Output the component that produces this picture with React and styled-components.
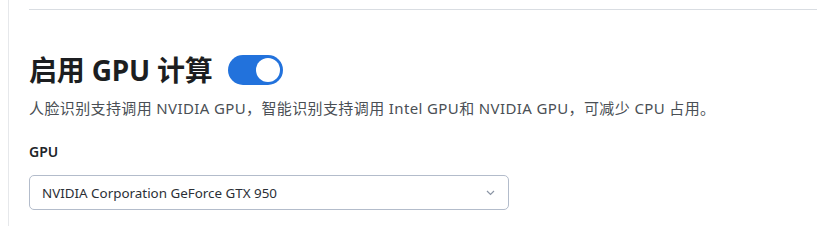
import React, { useState } from 'react';
import styled, { createGlobalStyle } from 'styled-components';

const GlobalStyle = createGlobalStyle`
  html, body {
    margin: 0;
    padding: 0;
    background: #ffffff;
  }
  body {
    font-family: "Noto Sans", "Noto Sans CJK SC", sans-serif;
    color: #212529;
  }
`;

const Page = styled.div`
  padding-left: 8px;
  height: 226px;
  overflow: hidden;
`;

const Panel = styled.div`
  border-left: 1px solid #e6e8eb;
  padding: 9px 0 20px 20px;
  min-height: 226px;
  box-sizing: border-box;
`;

const Divider = styled.hr`
  margin: 0;
  border: 0;
  border-top: 1px solid #d9dde2;
`;

const TitleRow = styled.div`
  display: flex;
  align-items: center;
  gap: 15px;
  margin-top: 45px;
  height: 30px;
`;

const Title = styled.h2`
  margin: 0;
  font-size: 28px;
  font-weight: 700;
  line-height: 1;
  color: #1c1e21;
  letter-spacing: -0.2px;
`;

const Switch = styled.button`
  position: relative;
  width: 55px;
  height: 30px;
  padding: 0;
  border: 0;
  border-radius: 15px;
  background: ${p => (p.$on ? '#2272dc' : '#c5ccd6')};
  cursor: pointer;
  flex-shrink: 0;
`;

const Knob = styled.span`
  position: absolute;
  top: 3px;
  left: ${p => (p.$on ? '28px' : '3px')};
  width: 24px;
  height: 24px;
  border-radius: 50%;
  background: #ffffff;
`;

const Description = styled.p`
  margin: 12px 0 0;
  font-size: 15px;
  line-height: 22px;
  letter-spacing: 0.38px;
  color: #4a4f55;
`;

const Label = styled.label`
  display: block;
  margin-top: 22px;
  font-size: 14px;
  font-weight: 600;
  line-height: 21px;
  color: #212529;
`;

const SelectWrap = styled.div`
  position: relative;
  width: 480px;
  margin-top: 13px;
`;

const Select = styled.select`
  appearance: none;
  width: 100%;
  height: 35px;
  padding: 0 32px 0 12px;
  border: 1px solid #b3bccb;
  border-radius: 5px;
  background: #ffffff;
  font-family: inherit;
  font-size: 13.4px;
  color: #2b2f36;
  outline: none;
`;

const Chevron = styled.svg`
  position: absolute;
  right: 14px;
  top: 50%;
  margin-top: -3px;
  pointer-events: none;
`;

export default function App() {
  const [on, setOn] = useState(true);
  const [gpu, setGpu] = useState('gtx950');

  return (
    <>
      <GlobalStyle />
      <Page>
        <Panel>
          <Divider />
          <TitleRow>
            <Title>启用 GPU 计算</Title>
            <Switch $on={on} onClick={() => setOn(!on)} aria-pressed={on}>
              <Knob $on={on} />
            </Switch>
          </TitleRow>
          <Description>
            人脸识别支持调用 NVIDIA GPU，智能识别支持调用 Intel GPU和 NVIDIA GPU，可减少 CPU 占用。
          </Description>
          <Label htmlFor="gpu-select">GPU</Label>
          <SelectWrap>
            <Select id="gpu-select" value={gpu} onChange={e => setGpu(e.target.value)}>
              <option value="gtx950">NVIDIA Corporation GeForce GTX 950</option>
            </Select>
            <Chevron width="9" height="6" viewBox="0 0 9 6">
              <path d="M1 1l3.5 3.5L8 1" fill="none" stroke="#8b95a5" strokeWidth="1.2" />
            </Chevron>
          </SelectWrap>
        </Panel>
      </Page>
    </>
  );
}
